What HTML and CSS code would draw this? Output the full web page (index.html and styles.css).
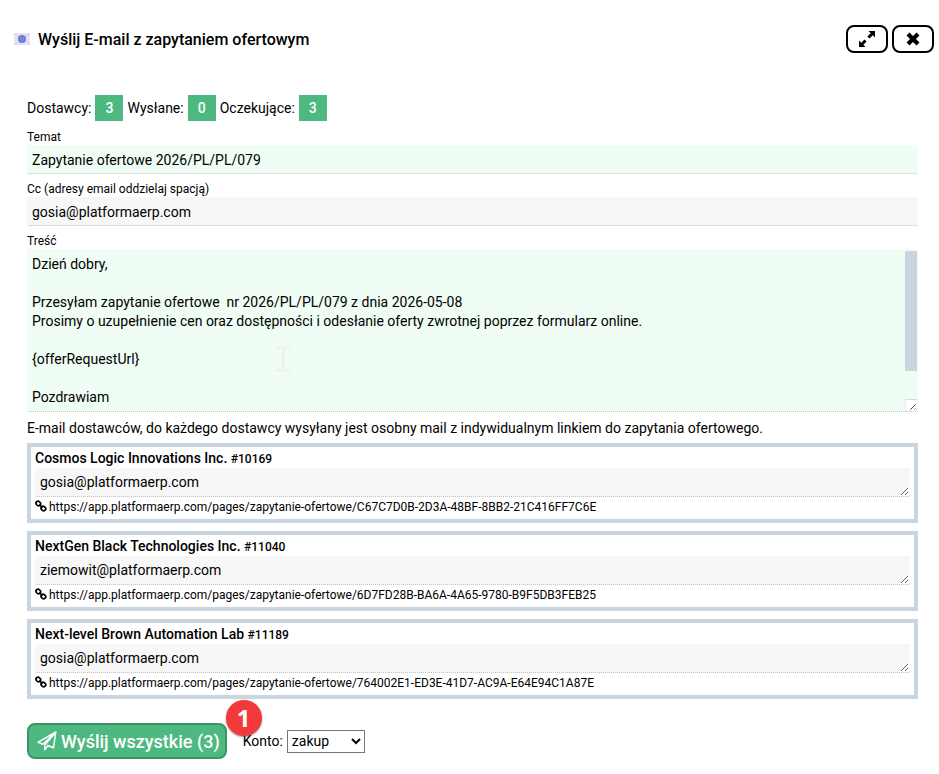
FILE: index.html
```html
<!DOCTYPE html>
<html lang="pl">
<head>
    <meta charset="utf-8">
    <title>Wyślij E-mail z zapytaniem ofertowym</title>
    <link rel="stylesheet" href="styles.css">
</head>
<body>
    <header class="dialog-header">
        <svg class="mail-icon" viewBox="0 0 16 12" aria-hidden="true">
            <rect width="16" height="12" fill="#e9dff0"/>
            <path d="M0 0l6 5M16 0l-6 5M0 12l6-5M16 12l-6-5" stroke="#d9cfe6" fill="none"/>
            <circle cx="8" cy="6" r="4" fill="#5b83d6"/>
            <circle cx="8" cy="6" r="1.5" fill="none" stroke="#8b8fd0"/>
            <path d="M9.5 4.5v2q.3 1 1.3.3" stroke="#8b8fd0" stroke-width=".7" fill="none"/>
        </svg>
        <h1 class="dialog-title">Wyślij E-mail z zapytaniem ofertowym</h1>
        <div class="window-btns">
            <button type="button" class="window-btn" aria-label="Powiększ">
                <svg width="18" height="18" viewBox="0 0 18 18"><path d="M10.500 1H17v6.500l-2.200-2.200-3.300 3.300-2.100-2.100L12.700 3.200zM1 10.500l2.200 2.200L6.500 9.400l2.100 2.100L5.300 14.800l2.200 2.200H1z"/></svg>
            </button>
            <button type="button" class="window-btn" aria-label="Zamknij">
                <svg width="14" height="14" viewBox="0 0 14 14"><path d="M3.500 3.500l7 7M10.500 3.500l-7 7" stroke="#000" stroke-width="4.200" stroke-linecap="square"/></svg>
            </button>
        </div>
    </header>

    <form class="mail-form">
        <div class="counters">
            <span>Dostawcy:</span><span class="badge">3</span>
            <span>Wysłane:</span><span class="badge">0</span>
            <span>Oczekujące:</span><span class="badge">3</span>
        </div>

        <div class="field">
            <label for="subject">Temat</label>
            <input class="control required" id="subject" type="text" value="Zapytanie ofertowe 2026/PL/PL/079">
        </div>
        <div class="field">
            <label for="cc">Cc (adresy email oddzielaj spacją)</label>
            <input class="control" id="cc" type="text" value="gosia@platformaerp.com">
        </div>
        <div class="field">
            <label for="content">Treść</label>
            <textarea class="control required content" id="content">Dzień dobry,

Przesyłam zapytanie ofertowe  nr 2026/PL/PL/079 z dnia 2026-05-08
Prosimy o uzupełnienie cen oraz dostępności i odesłanie oferty zwrotnej poprzez formularz online.

{offerRequestUrl}

Pozdrawiam

</textarea>
            <div class="scrollbar" aria-hidden="true">
                <div class="scroll-thumb"></div>
                <svg class="resizer" viewBox="0 0 12 12"><path d="M0 12V.5h12" fill="none" stroke="#d9d9d9"/><path d="M5.500 10.500l5-5M9.500 10.500l1-1" stroke="#444" fill="none"/></svg>
            </div>
            <svg class="text-cursor" viewBox="0 0 14 26" aria-hidden="true"><path d="M0 1.500h5.500l1.500 1 1.500-1H14M7 2v22M0 24.500h5.500l1.500-1 1.500 1H14" fill="none" stroke="#eeeff0" stroke-width="2"/></svg>
        </div>

        <p class="info">E-mail dostawców, do każdego dostawcy wysyłany jest osobny mail z indywidualnym linkiem do zapytania ofertowego.</p>

        <div class="suppliers">
            <section class="supplier">
                <label class="supplier-name" for="mail-10169">Cosmos Logic Innovations Inc. <small>#10169</small></label>
                <textarea class="control supplier-mail" id="mail-10169">gosia@platformaerp.com</textarea>
                <div class="supplier-link">
                    <svg class="link-icon" viewBox="0 0 12 12"><use href="#chain"/></svg>
                    <a href="https://app.platformaerp.com/pages/zapytanie-ofertowe/C67C7D0B-2D3A-48BF-8BB2-21C416FF7C6E">https://app.platformaerp.com/pages/zapytanie-ofertowe/C67C7D0B-2D3A-48BF-8BB2-21C416FF7C6E</a>
                </div>
            </section>
            <section class="supplier">
                <label class="supplier-name" for="mail-11040">NextGen Black Technologies Inc. <small>#11040</small></label>
                <textarea class="control supplier-mail" id="mail-11040">ziemowit@platformaerp.com</textarea>
                <div class="supplier-link">
                    <svg class="link-icon" viewBox="0 0 12 12"><use href="#chain"/></svg>
                    <a href="https://app.platformaerp.com/pages/zapytanie-ofertowe/6D7FD28B-BA6A-4A65-9780-B9F5DB3FEB25">https://app.platformaerp.com/pages/zapytanie-ofertowe/6D7FD28B-BA6A-4A65-9780-B9F5DB3FEB25</a>
                </div>
            </section>
            <section class="supplier">
                <label class="supplier-name" for="mail-11189">Next-level Brown Automation Lab <small>#11189</small></label>
                <textarea class="control supplier-mail" id="mail-11189">gosia@platformaerp.com</textarea>
                <div class="supplier-link">
                    <svg class="link-icon" viewBox="0 0 12 12"><use href="#chain"/></svg>
                    <a href="https://app.platformaerp.com/pages/zapytanie-ofertowe/764002E1-ED3E-41D7-AC9A-E64E94C1A87E">https://app.platformaerp.com/pages/zapytanie-ofertowe/764002E1-ED3E-41D7-AC9A-E64E94C1A87E</a>
                </div>
            </section>
        </div>

        <div class="actions">
            <div class="send">
                <button type="button" class="send-btn">
                    <svg width="20" height="20" viewBox="0 0 20 20" aria-hidden="true"><path d="M18.800 1L1.200 11.200l4.600 2L18.800 1l-2.300 15.800-6.500-2.600M18.800 1L7.800 14v4.800l3-4.200" fill="none" stroke="#fff" stroke-width="1.500" stroke-linejoin="round"/></svg>
                    Wyślij wszystkie (3)
                </button>
                <span class="step">1</span>
            </div>
            <label for="account">Konto:</label>
            <select class="account" id="account">
                <option>zakup</option>
            </select>
        </div>
    </form>

    <svg class="symbols" aria-hidden="true">
        <symbol id="chain" viewBox="0 0 12 12">
            <g fill="none" stroke="#000" stroke-width="1.700" stroke-linecap="round">
                <rect x="-2.400" y="-2" width="4.800" height="4" rx="1.900" transform="translate(3.300 3.500) rotate(45)"/>
                <rect x="-2.400" y="-2" width="4.800" height="4" rx="1.900" transform="translate(8.400 8.500) rotate(45)"/>
                <path d="M4.800 5l2.200 2.200"/>
            </g>
        </symbol>
    </svg>
</body>
</html>
```

FILE: styles.css
```css
* {
    box-sizing: border-box;
}
body {
    margin: 0;
    background-color: #fff;
    color: #000;
    font-family: Roboto, "Liberation Sans", sans-serif;
    font-size: 14px;
    line-height: 19px;
}
button, input, textarea, select {
    font-family: inherit;
    font-size: inherit;
    line-height: inherit;
    color: inherit;
}
.dialog-header {
    display: flex;
    align-items: center;
    gap: 8px;
    padding: 25px 5px 0 14px;
}
.mail-icon {
    width: 16px;
    height: 12px;
}
.dialog-title {
    flex: 1;
    margin: 0;
    font-size: 16px;
    font-weight: 500;
}
.window-btns {
    display: flex;
    gap: 4px;
}
.window-btn {
    display: flex;
    align-items: center;
    justify-content: center;
    width: 42px;
    height: 28px;
    padding: 0;
    background-color: #fff;
    border: 2px solid #000;
    border-radius: 8px;
    cursor: pointer;
}
.mail-form {
    padding: 42px 21px 15px 27px;
}
.counters {
    display: flex;
    align-items: center;
    gap: 4px;
    margin-bottom: 8px;
}
.badge {
    width: 28px;
    background-color: #4db980;
    color: #fff;
    line-height: 26px;
    text-align: center;
    font-weight: 500;
}
.field {
    position: relative;
    margin-bottom: 7px;
}
.field label {
    display: block;
    font-size: 12px;
    line-height: 16px;
}
.control {
    display: block;
    width: 100%;
    height: 29px;
    margin: 0;
    padding: 4px;
    border: 1px solid transparent;
    border-bottom: 1px dotted #c4c4c4;
    background-color: #f7f7f7;
    outline: none;
}
.required {
    background-color: #effdf4;
}
.content {
    height: 163px;
    padding: 5px 16px 4px 4px;
    overflow-y: auto;
    resize: none;
    scrollbar-width: none;
}
.scrollbar {
    position: absolute;
    top: 18px;
    right: 1px;
    bottom: 1px;
    display: flex;
    flex-direction: column;
    justify-content: space-between;
    width: 12px;
    pointer-events: none;
}
.scroll-thumb {
    height: 120px;
    background-color: #cbd5e0;
}
.resizer {
    width: 12px;
    height: 12px;
    background-color: #fff;
}
.text-cursor {
    position: absolute;
    left: 249px;
    top: 113px;
    width: 14px;
    height: 26px;
    pointer-events: none;
}
.info {
    margin: 0 0 5px;
}
.suppliers {
    display: grid;
    gap: 8px;
}
.supplier {
    padding: 2px 4px;
    border: 4px solid #cbd5e0;
}
.supplier-name {
    display: block;
    font-weight: 500;
}
.supplier-name small {
    font-size: 12px;
    line-height: 1;
}
.supplier-link {
    display: flex;
    align-items: center;
    gap: 2px;
    font-size: 12px;
    line-height: 20px;
}
.supplier-link a {
    color: inherit;
    text-decoration: none;
}
.link-icon {
    width: 12px;
    height: 12px;
    margin-bottom: 2px;
}
.actions {
    display: flex;
    align-items: center;
    gap: 4px;
    margin-top: 24px;
}
.send {
    position: relative;
    margin-right: 12px;
}
.send-btn {
    display: flex;
    align-items: center;
    gap: 4px;
    height: 36px;
    padding: 0 5px 0 8px;
    background-color: #4db980;
    border: 2px solid #3d9467;
    border-radius: 8px;
    color: #fff;
    font-size: 18px;
    font-weight: 500;
    cursor: pointer;
}
.step {
    position: absolute;
    top: -23px;
    right: -35px;
    width: 36px;
    border-radius: 50%;
    background-color: #f23a3c;
    box-shadow: 0 1px 2px rgba(0, 0, 0, 0.4);
    color: #fff;
    font-family: "Open Sans", sans-serif;
    font-size: 24px;
    font-weight: 700;
    line-height: 36px;
    text-align: center;
}
.account {
    width: 78px;
    height: 23px;
    background-color: #fff;
    border: 1px solid #767676;
}
.symbols {
    display: none;
}
```
